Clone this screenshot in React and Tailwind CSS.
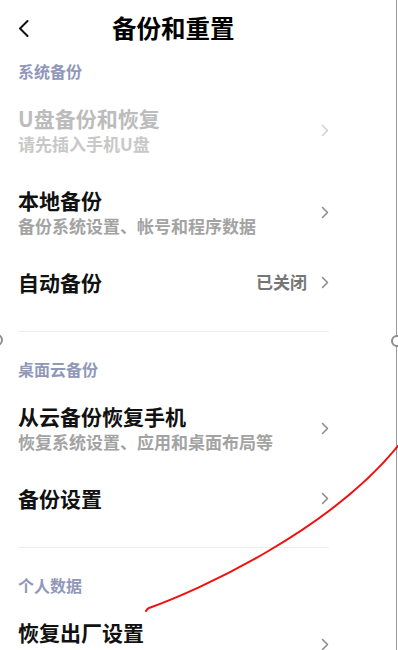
import React from "react";

function Chevron({ light }) {
  return (
    <svg width="8" height="13" viewBox="0 0 8 13" className="shrink-0">
      <path d="M1.5 1.5 L6.5 6.5 L1.5 11.5" fill="none" stroke={light ? "#d0d0d0" : "#8a8a8a"} strokeWidth="1.5" strokeLinecap="round" strokeLinejoin="round" />
    </svg>
  );
}

function Label({ children, first }) {
  return (
    <div className={`${first ? "pt-[4px]" : "pt-[26px]"} pb-[7px] text-[16px] leading-[22px] font-bold text-[#9197b9]`}>
      {children}
    </div>
  );
}

function Row({ title, sub, value, disabled }) {
  return (
    <div className="flex items-center py-[15px]">
      <div className="flex-1 min-w-0">
        <div className={`text-[21px] leading-[28px] font-bold ${disabled ? "text-[#bcbcbc]" : "text-[#111]"}`}>{title}</div>
        {sub && (
          <div className={`text-[17px] leading-[24px] font-bold ${disabled ? "text-[#c8c8c8]" : "text-[#a3a3a3]"}`}>{sub}</div>
        )}
      </div>
      {value && <div className="mr-[14px] text-[17px] leading-[24px] font-bold text-[#767676]">{value}</div>}
      <Chevron light={disabled} />
    </div>
  );
}

function Divider() {
  return <div className="mt-[20px] h-px bg-[#ececec]" />;
}

export default function App() {
  return (
    <div className="relative w-[398px] h-[650px] overflow-hidden bg-white" style={{ fontFamily: '"Noto Sans CJK SC", "Noto Sans", sans-serif' }}>
      <div className="w-[397px] h-full border-r border-[#9a9a9a]">
        <div className="h-[56px] flex items-center pl-[18px]">
          <svg width="11" height="17" viewBox="0 0 11 17" className="shrink-0">
            <path d="M9.5 1 L2 8.5 L9.5 16" fill="none" stroke="#111" strokeWidth="2" strokeLinecap="round" strokeLinejoin="round" />
          </svg>
          <div className="ml-[83px] text-[24.5px] leading-[32px] font-bold text-black">备份和重置</div>
        </div>
        <div className="ml-[18px] w-[311px]">
          <Label first>系统备份</Label>
          <Row title="U盘备份和恢复" sub="请先插入手机U盘" disabled />
          <Row title="本地备份" sub="备份系统设置、帐号和程序数据" />
          <Row title="自动备份" value="已关闭" />
          <Divider />
          <Label>桌面云备份</Label>
          <Row title="从云备份恢复手机" sub="恢复系统设置、应用和桌面布局等" />
          <Row title="备份设置" />
          <Divider />
          <Label>个人数据</Label>
          <Row title="恢复出厂设置" sub="清除所有数据并恢复出厂" />
        </div>
      </div>
      <div className="absolute left-[-9px] top-[334px] w-[12px] h-[12px] rounded-full border-2 border-[#8c8c8c] bg-white" />
      <div className="absolute left-[391px] top-[335px] w-[12px] h-[12px] rounded-full border-2 border-[#8c8c8c] bg-white" />
      <svg className="absolute left-0 top-0 pointer-events-none" width="398" height="650" viewBox="0 0 398 650">
        <path d="M146 611 Q147 609 149 608 C 200 590, 330 530, 398 446" fill="none" stroke="#f01010" strokeWidth="2" strokeLinecap="round" />
      </svg>
    </div>
  );
}
